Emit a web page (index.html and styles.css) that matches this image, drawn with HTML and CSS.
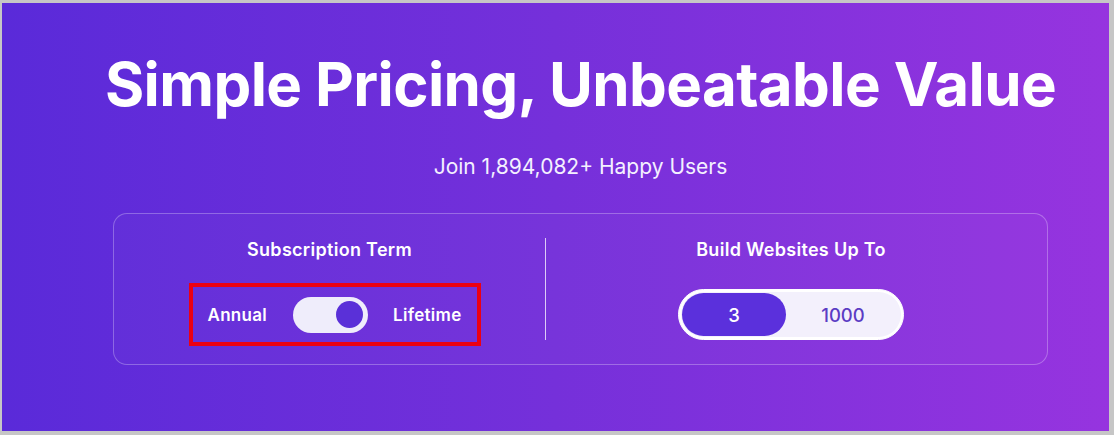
FILE: index.html
```html
<!DOCTYPE html>
<html lang="en">
<head>
    <meta charset="UTF-8">
    <meta name="viewport" content="width=device-width, initial-scale=1.0">
    <title>Simple Pricing</title>
    <link rel="stylesheet" href="styles.css">
</head>
<body>
    <section class="pricing-hero">
        <div class="hero-inner">
            <h1 class="hero-title">Simple Pricing, Unbeatable Value</h1>
            <p class="hero-sub">Join 1,894,082+ Happy Users</p>

            <div class="options-card">
                <div class="option-col">
                    <h3 class="option-label">Subscription Term</h3>
                    <div class="term-switch">
                        <span class="term-text">Annual</span>
                        <button class="toggle is-on" aria-label="Toggle term">
                            <span class="toggle-knob"></span>
                        </button>
                        <span class="term-text">Lifetime</span>
                    </div>
                </div>

                <div class="option-divider"></div>

                <div class="option-col option-col-right">
                    <h3 class="option-label">Build Websites Up To</h3>
                    <div class="segmented">
                        <button class="seg-btn active">3</button>
                        <button class="seg-btn">1000</button>
                    </div>
                </div>
            </div>
        </div>
    </section>
</body>
</html>
```

FILE: styles.css
```css
* {
    box-sizing: border-box;
}
body {
    margin: 0;
    background: #c6c6c6;
    font-family: "Inter", "Open Sans", sans-serif;
}
.pricing-hero {
    margin: 3px 5px 4px 2px;
    height: 428px;
    background: linear-gradient(90deg, #5a2ad9 0%, #7530da 50%, #9634df 100%);
    color: #fff;
    padding-left: 111px;
    overflow: hidden;
}
.hero-inner {
    width: 935px;
    display: flex;
    flex-direction: column;
    align-items: center;
}
.hero-title {
    margin: 45px 0 0;
    font-size: 60px;
    line-height: 72px;
    font-weight: 700;
    white-space: nowrap;
    letter-spacing: -0.6px;
}
.hero-sub {
    margin: 33px 0 0;
    font-size: 21px;
    line-height: 28px;
    font-weight: 400;
    color: #f4f0ff;
}
.options-card {
    margin-top: 32px;
    width: 935px;
    display: grid;
    grid-template-columns: 431px 1px 1fr;
    align-items: start;
    border: 1px solid rgba(255, 255, 255, 0.28);
    border-radius: 14px;
    background: rgba(255, 255, 255, 0.02);
    padding: 24px 0 18px;
}
.option-col {
    display: flex;
    flex-direction: column;
    align-items: center;
}
.option-col-right {
    padding-right: 11px;
}
.option-label {
    margin: 0;
    font-size: 18px;
    line-height: 24px;
    font-weight: 600;
    letter-spacing: 0.3px;
}
.option-divider {
    height: 102px;
    background: rgba(255, 255, 255, 0.75);
}
.term-switch {
    margin: 21px 0 0 10px;
    width: 292px;
    height: 63px;
    display: flex;
    align-items: center;
    justify-content: space-between;
    padding: 0 15px 0 15px;
    border: 4px solid #ec0012;
}
.term-text {
    font-size: 17px;
    font-weight: 600;
    letter-spacing: 0.3px;
}
.toggle {
    width: 75px;
    height: 36px;
    border: none;
    border-radius: 18px;
    background: #efedfb;
    padding: 0 5px;
    display: flex;
    align-items: center;
    cursor: pointer;
}
.toggle.is-on {
    justify-content: flex-end;
}
.toggle-knob {
    width: 27px;
    height: 27px;
    border-radius: 50%;
    background: #5a30d8;
}
.segmented {
    margin-top: 27px;
    display: flex;
    width: 226px;
    height: 51px;
    padding: 3px;
    border-radius: 26px;
    background: #f3f0fc;
    border: 1px solid #fff;
    box-shadow: inset 0 0 0 2px #fff;
}
.seg-btn {
    flex: 0 0 104px;
    border: none;
    border-radius: 22px;
    background: transparent;
    font-family: inherit;
    font-size: 18.5px;
    font-weight: 500;
    color: #5b3cc4;
    cursor: pointer;
}
.seg-btn + .seg-btn {
    flex: 1;
}
.seg-btn.active {
    background: #5b30dc;
    color: #fff;
}
```
